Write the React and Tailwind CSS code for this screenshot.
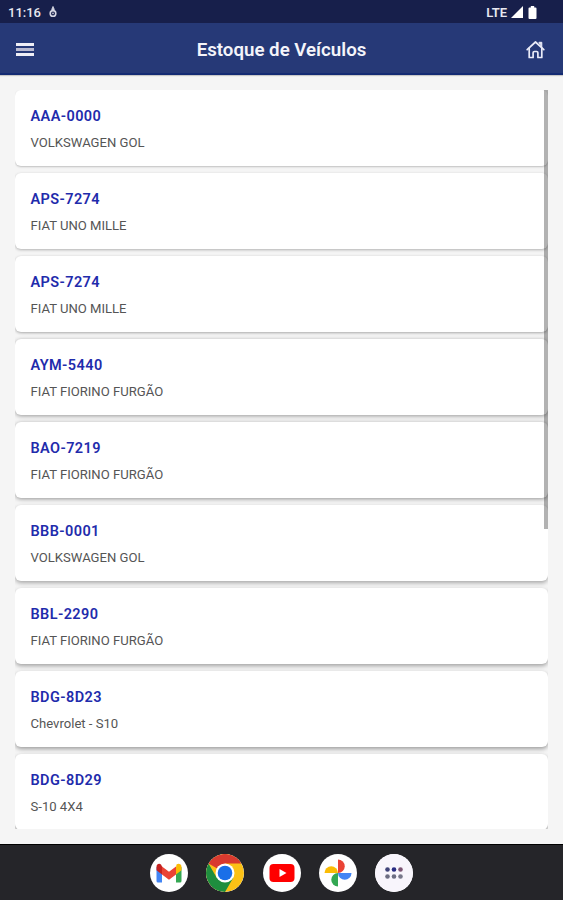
import React from 'react';

const vehicles = [
  { plate: 'AAA-0000', model: 'VOLKSWAGEN GOL', shadow: 'shadow-[0_1px_2px_rgba(0,0,0,0.22)]' },
  { plate: 'APS-7274', model: 'FIAT UNO MILLE', shadow: 'shadow-[0_1px_3px_rgba(0,0,0,0.28)]' },
  { plate: 'APS-7274', model: 'FIAT UNO MILLE', shadow: 'shadow-[0_1px_3px_rgba(0,0,0,0.32)]' },
  { plate: 'AYM-5440', model: 'FIAT FIORINO FURGÃO', shadow: 'shadow-[0_1px_4px_rgba(0,0,0,0.38)]' },
  { plate: 'BAO-7219', model: 'FIAT FIORINO FURGÃO', shadow: 'shadow-[0_1px_4px_rgba(0,0,0,0.4)]' },
  { plate: 'BBB-0001', model: 'VOLKSWAGEN GOL', shadow: 'shadow-[0_2px_4px_rgba(0,0,0,0.32)]' },
  { plate: 'BBL-2290', model: 'FIAT FIORINO FURGÃO', shadow: 'shadow-[0_2px_4px_rgba(0,0,0,0.34)]' },
  { plate: 'BDG-8D23', model: 'Chevrolet - S10', shadow: 'shadow-[0_2px_4px_rgba(0,0,0,0.36)]' },
  { plate: 'BDG-8D29', model: 'S-10 4X4', shadow: 'shadow-[0_2px_4px_rgba(0,0,0,0.36)]' },
];

function StatusBar() {
  return (
    <div className="flex h-[23px] shrink-0 items-center bg-[#171f4b] pt-[2px] pr-[26px] pl-2 text-[#e8e8f0]">
      <span className="text-[13px] leading-none font-medium">11:16</span>
      <svg width="8" height="12" viewBox="0 0 8 12" className="ml-2 -mt-[2px]" fill="none" stroke="#d5d6e2">
        <path d="M4 .5v4" strokeWidth="1.8" />
        <path d="M2.300 3.200h3.400" strokeWidth="1.400" />
        <circle cx="4" cy="7.400" r="2.800" strokeWidth="1.600" />
        <circle cx="4" cy="7.400" r=".8" fill="#d5d6e2" stroke="none" />
      </svg>
      <span className="ml-auto -mt-px text-[13px] leading-none font-semibold">LTE</span>
      <svg width="12" height="12" viewBox="0 0 12 12" className="ml-[4px] -mt-px" fill="#fff">
        <path d="M12 0v12H0z" />
      </svg>
      <svg width="9" height="13" viewBox="0 0 9 13" className="ml-[5px] -mt-px" fill="#fff">
        <path d="M2.800 0h3.400v1.400h1.300q1 0 1 1V12q0 1-1 1h-6q-1 0-1-1V2.400q0-1 1-1h1.300z" />
      </svg>
    </div>
  );
}

function AppBar() {
  return (
    <header className="z-10 flex h-[52px] shrink-0 items-center justify-between border-b-2 border-[#142b73] bg-[#263977] pr-[18px] pl-4 shadow-[0_1px_1px_rgba(0,0,0,0.18)]">
      <button aria-label="Menu" className="flex w-[18px] flex-col gap-[2px] pt-[3px]">
        <span className="h-[3px] bg-[#eeeef6]" />
        <span className="h-[3px] bg-[#b9bad0]" />
        <span className="h-[3px] bg-[#eeeef6]" />
      </button>
      <h1 className="pt-[5px] pl-[3px] text-[18.7px] leading-none font-semibold text-[#f4f4fa]">Estoque de Veículos</h1>
      <button aria-label="Início" className="pt-[3px]">
        <svg width="19" height="19" viewBox="0 0 19 19" fill="none" stroke="#e9ebf8" strokeWidth="1.700" strokeLinejoin="round" strokeLinecap="round">
          <path d="M1.200 9.600 9.500 2 17.800 9.600" />
          <path d="M3.200 8.200V17.500h3.900V12.800q0-1.300 1.300-1.300h2.200q1.300 0 1.300 1.300v4.700h3.900V8.200" />
          <path d="M13.300 2.300h2.500v4.500z" fill="#e9ebf8" strokeWidth="1" />
        </svg>
      </button>
    </header>
  );
}

function VehicleCard({ vehicle }) {
  return (
    <li className={`h-[76px] shrink-0 rounded-[6px] bg-white pt-[19px] pl-[15.5px] ${vehicle.shadow}`}>
      <p className="text-[14.5px] leading-4 font-semibold tracking-[0.4px] text-[#1f2cac]">{vehicle.plate}</p>
      <p className="mt-[10px] text-[13.1px] leading-4 text-[#555]">{vehicle.model}</p>
    </li>
  );
}

function DockIcon({ label, children }) {
  return (
    <button aria-label={label} className="size-[38px] overflow-hidden rounded-full bg-white">
      <svg width="38" height="38" viewBox="0 0 38 38">
        {children}
      </svg>
    </button>
  );
}

function Dock() {
  return (
    <nav className="flex h-14 shrink-0 items-center justify-center gap-[18.2px] border-t border-black bg-[#252529]">
      <DockIcon label="Gmail">
        <path d="M6.500 13v14q0 1.500 1.500 1.500h4V16z" fill="#4285f4" />
        <path d="M31.500 13v14q0 1.500-1.500 1.500h-4V16z" fill="#34a853" />
        <path d="M26 13.500V20.500l5.500-4.200V13c0-3-3-4-5-2.500z" fill="#fbbc04" />
        <path d="M12 20.500v-8l7 5.300 7-5.300v8l-7 5.300z" fill="#ea4335" />
        <path d="M6.500 13v3.300l5.500 4.200v-8L11 10.500c-2-1.500-4.500-.3-4.500 2.500z" fill="#c5221f" />
      </DockIcon>
      <DockIcon label="Chrome">
        <circle cx="19" cy="19" r="19" fill="#fbc116" />
        <path d="M19 19 2.500 9.500A19 19 0 0 1 35.500 9.500H19z" fill="#d93a2f" />
        <path d="M2.500 9.500A19 19 0 0 0 19 38l8.300-14.300L19 19 10.700 23.800z" fill="#1e8e3e" />
        <circle cx="19" cy="19" r="9.500" fill="#fff" />
        <circle cx="19" cy="19" r="7.300" fill="#1a6fe8" />
      </DockIcon>
      <DockIcon label="YouTube">
        <rect x="6.500" y="10" width="25" height="18" rx="4" fill="#f00" />
        <path d="M16.500 15v8l7-4z" fill="#fff" />
      </DockIcon>
      <DockIcon label="Fotos">
        <path d="M19 19V5.500a6.750 6.750 0 0 1 0 13.500z" fill="#ea4335" />
        <path d="M19 19h13.500a6.750 6.750 0 0 1-13.500 0z" fill="#4285f4" />
        <path d="M19 19v13.500a6.750 6.750 0 0 1 0-13.500z" fill="#34a853" />
        <path d="M19 19H5.500a6.750 6.750 0 0 1 13.500 0z" fill="#fbbc04" />
      </DockIcon>
      <DockIcon label="Aplicativos">
        <circle cx="19" cy="19" r="19" fill="#f8f5fc" />
        <circle cx="12.500" cy="15.500" r="2.300" fill="#3f4379" />
        <circle cx="19" cy="15.500" r="2.300" fill="#292c82" />
        <circle cx="25.500" cy="15.500" r="2.300" fill="#7d5675" />
        <circle cx="12.500" cy="22.500" r="2.300" fill="#6c6d82" />
        <circle cx="19" cy="22.500" r="2.300" fill="#6c6d82" />
        <circle cx="25.500" cy="22.500" r="2.300" fill="#77778a" />
      </DockIcon>
    </nav>
  );
}

function App() {
  return (
    <div className="flex h-[900px] w-[563px] flex-col overflow-hidden bg-[#f5f5f5] font-['Roboto',sans-serif]">
      <StatusBar />
      <AppBar />
      <main className="min-h-0 flex-1 px-[15px] pt-[15px] pb-[15px]">
        <div className="relative h-[739px] w-[533px] overflow-hidden">
          <ul className="flex flex-col gap-[7px]">
            {vehicles.map((vehicle, index) => (
              <VehicleCard key={index} vehicle={vehicle} />
            ))}
          </ul>
          {/* scroll thumb */}
          <div className="absolute top-0 right-0 h-[439px] w-[4px] bg-black/30" />
        </div>
      </main>
      <Dock />
    </div>
  );
}

export default App;
